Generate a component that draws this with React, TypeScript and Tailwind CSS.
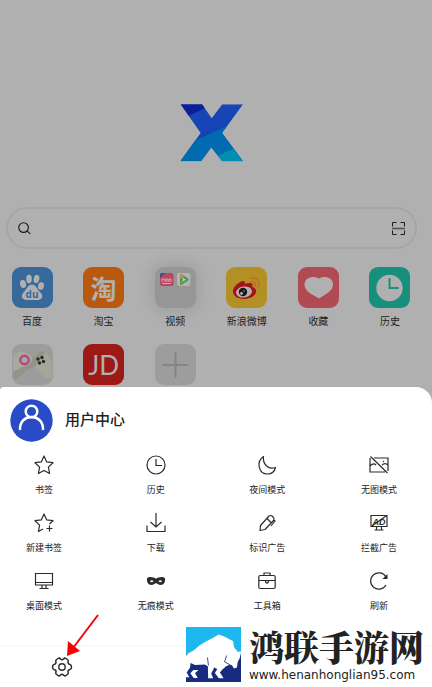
import React from 'react';

const ink = '#2b2b2b';

function Glyph({ children, size = 22 }: { children: React.ReactNode; size?: number }) {
  return (
    <svg width={size} height={size} viewBox="0 0 22 22" fill="none" stroke={ink} strokeWidth="1.2" aria-hidden="true">
      {children}
    </svg>
  );
}

function BrandLogo() {
  return (
    <svg width="64" height="58" viewBox="60 41 192 174" role="img" aria-label="X">
      <defs>
        <clipPath id="x-shape">
          <path d="M62 42H126L155 84L187 42H249L186 128L249 213H187L154 171L123 213H61L122 128Z" />
        </clipPath>
        <linearGradient id="x-blue" x1="0" y1="0" x2="0.35" y2="1">
          <stop offset="0.5" stopColor="#1745b6" />
          <stop offset="1" stopColor="#153a9c" />
        </linearGradient>
      </defs>
      <g clipPath="url(#x-shape)">
        <rect x="60" y="41" width="192" height="174" fill="url(#x-blue)" />
        <path d="M60 41H160L131 55L85 77L60 89Z" fill="#0c1e98" />
        <path d="M60 172L108 149L200 108L252 84V215H60Z" fill="#006bb1" />
        <path d="M170 198L222 174L252 160V215H170Z" fill="#008eb1" />
      </g>
    </svg>
  );
}

function BaiduIcon() {
  return (
    <svg viewBox="0 0 41 41" className="size-full" aria-hidden="true">
      <g fill="#b0b0b0">
        <ellipse cx="11" cy="17" rx="3" ry="4" transform="rotate(-12 11 17)" />
        <ellipse cx="17" cy="12" rx="2.8" ry="4.2" />
        <ellipse cx="24.500" cy="12" rx="2.800" ry="4.200" transform="rotate(12 24.500 12)" />
        <ellipse cx="29" cy="19" rx="3" ry="3.800" transform="rotate(12 29 19)" />
        <path d="M20 17.500c4 0 5 5 8 7.500 5 5 1 8.500-4 8h-8c-6 .5-8-4-4-8 3-3 4-7.500 8-7.500Z" />
      </g>
      <text x="20" y="31" textAnchor="middle" fontSize="10" fontWeight="700" fontFamily="Open Sans, sans-serif" fill="#38689a">du</text>
    </svg>
  );
}

function GameIcon() {
  return (
    <svg viewBox="0 0 41 41" className="size-full" aria-hidden="true">
      <path d="M22 15c4-9 11-10 15-2l3 8v13q-4 1-9-2l-8-8Z" fill="#a6a698" />
      <path d="M1 33l3-19c4-6 13-5 17 0 4-4 7-8 12-6-5 11-11 16-18 18L5 35q-3 0-4-2Z" fill="#939388" />
      <path d="M1 28V13c4-8 14-6 19 0 1 6-4 9-10 10Z" fill="#a8a89f" />
      <circle cx="12.500" cy="16" r="4.200" fill="#a8a8a8" stroke="#b84778" strokeWidth="2.400" />
      <g fill="#282828"><circle cx="26" cy="15" r="1.700" /><circle cx="30" cy="13.500" r="1.700" /><circle cx="27.500" cy="19" r="1.700" /><circle cx="31.500" cy="17.500" r="1.700" /></g>
    </svg>
  );
}

function FolderIcon() {
  return (
    <svg viewBox="0 0 41 41" className="size-full" aria-hidden="true">
      <rect x="5" y="6" width="13.500" height="13" rx="2.500" fill="#b94761" />
      <path d="M5 11V8q0-2 2-2h3Z" fill="#2c56a0" />
      <path d="M7 15v-3h3v3m1 0v-3h2v3m1 0v-3h2v3M7 16.500h9" fill="none" stroke="#cfa7b0" strokeWidth="1" />
      <rect x="22" y="6" width="13.500" height="13" rx="2.500" fill="#b4b5b0" />
      <path d="M25 8.500v8q0 2 2 1l6-4q1-1 0-2l-6-4q-2-1-2 1Z" fill="#258bae" />
      <path d="M25 14v3q1 1.500 2 .5l6-4-2-2Z" fill="#659f2d" />
      <path d="M25 12V8q1-1.500 2-.5l3 2Z" fill="#c48d27" />
      <path d="M27.500 10.500v4l3.500-2Z" fill="#c4c4bb" />
    </svg>
  );
}

function WeiboIcon() {
  return (
    <svg viewBox="0 0 41 41" className="size-full" aria-hidden="true">
      <path d="M7 25c-1-5 7-11 10-11 2 0 2.500 2 1.500 3 4-1.500 8-1.500 8 1 0 1-.5 1.500 0 2 8 3 2 12-8 12-6 0-10.500-2-11.500-7Z" fill="#a5131c" />
      <ellipse cx="18" cy="25" rx="8" ry="5.500" fill="#b3b3b3" transform="rotate(-8 18 25)" />
      <circle cx="17" cy="25" r="4.200" fill="#171717" />
      <circle cx="15.500" cy="26.500" r="1.400" fill="#b3b3b3" /><circle cx="18" cy="24" r=".7" fill="#b3b3b3" />
      <path d="M24.500 11.500c5-2.500 10 3 8 8M25 15c3-1 5 1 4 4" fill="none" stroke="#bd7525" strokeWidth="1.800" strokeLinecap="round" />
    </svg>
  );
}

const apps = [
  { name: '百度', tile: 'bg-[#38699b]', art: <BaiduIcon /> },
  {
    name: '淘宝', tile: 'bg-[#b95910]',
    art: <span className="text-[26px] leading-none font-bold text-[#b0b0b0]" aria-hidden="true">淘</span>,
  },
  { name: '视频', tile: 'bg-[#969696] shadow-[0_0_14px_4px_rgba(0,0,0,0.09)]', art: <FolderIcon /> },
  { name: '新浪微博', tile: 'bg-[#b39023]', art: <WeiboIcon /> },
  {
    name: '收藏', tile: 'bg-[#b04a53]',
    art: (
      <svg viewBox="0 0 41 41" className="size-full" aria-hidden="true">
        <path d="M21 11.500c4-3 14-2 14 6 0 6-6 9-14 14C13 27 6.500 24 6.500 17.500c0-8 10-9 14.500-6Z" fill="#b0b0b0" />
      </svg>
    ),
  },
  {
    name: '历史', tile: 'bg-[#188f7c]',
    art: (
      <svg viewBox="0 0 41 41" className="size-full" aria-hidden="true">
        <circle cx="20.500" cy="21" r="13.200" fill="#b0b0b0" />
        <path d="M20.500 12v9H29" fill="none" stroke="#188f7c" strokeWidth="2" strokeLinecap="round" />
      </svg>
    ),
  },
  { name: '游戏', tile: 'bg-[#9c9c9c]', art: <GameIcon />, bare: true },
  {
    name: '京东', tile: 'bg-[#9d1915]', bare: true,
    art: (
      <span className="font-['Lato',sans-serif] text-[26px] leading-none text-[#b0b0b0]" aria-hidden="true">JD</span>
    ),
  },
  {
    name: '添加', tile: 'bg-[#9d9d9d]', bare: true,
    art: (
      <svg viewBox="0 0 41 41" className="size-full" aria-hidden="true">
        <path d="M20.500 9v24M8.500 21h24" stroke="#858585" strokeWidth="2.200" strokeLinecap="round" />
      </svg>
    ),
  },
];

const star = 'M11 2l2.700 5.900 6.300.8-4.600 4.400 1.200 6.400L11 16.500l-5.600 3 1.200-6.400L2 8.700l6.300-.8Z';

const actions = [
  { name: '书签', icon: <path d={star} strokeLinejoin="round" /> },
  { name: '历史', icon: <><circle cx="11" cy="11" r="9" /><path d="M11 5v6.500h6" /></> },
  { name: '夜间模式', icon: <path d="M7.500 2.500C-.5 8 3 20 11.500 20c4 0 7-2.500 8-6.500C12 16 6.500 10 7.500 2.500Z" strokeLinejoin="round" /> },
  {
    name: '无图模式',
    icon: <><path d="M6 4h14v13M17 18H2V4M2 12c2-2 4-3 6-1M14 11c2-2 4-2 6 0M2.500 2.500 19.500 19" /><circle cx="15.500" cy="7.500" r=".7" fill={ink} stroke="none" /></>,
  },
  {
    name: '新建书签',
    icon: <path d="M10 17l-4.600 2.500 1.200-6.400L2 8.700l6.300-.8L11 2l2.700 5.900 6.300.8-3.500 3.300M16.500 13.500v6M13.500 16.500h6" strokeLinejoin="round" />,
  },
  { name: '下载', icon: <path d="M11 1v13.500M5.500 10l5.500 5 5.500-5M2 13.500v6h18v-6" /> },
  {
    name: '标识广告',
    icon: <path d="M4 18.500l.5-5 8.500-9.500q1.500-1 3 0l1.500 1.500q1 1.500 0 3L9 17.500ZM11 6.500l4.500 4.500M17.500 7.500l1.500 1.500-4 5" strokeLinejoin="round" />,
  },
  {
    name: '拦截广告',
    icon: <><path d="M3 3.500h16v11H3ZM8.500 14.500v3M13.500 14.500v3M6.500 18h9M4 14 18 4" /><text x="11" y="12.500" textAnchor="middle" fontFamily="Liberation Sans, sans-serif" fontSize="9" fontWeight="700" fontStyle="italic" fill={ink} stroke="none">AD</text></>,
  },
  { name: '桌面模式', icon: <path d="M2.500 3.500h17V15h-17ZM2.500 12.500h17M9 15v3.500M13 15v3.500M6.500 18.500h9" /> },
  {
    name: '无痕模式',
    icon: <path fill={ink} stroke="none" fillRule="evenodd" d="M2 8c3-2 7-.5 9 .7C13 7.500 17 6 20 8c.5 4-1 7-4.500 7-2 0-3-1.800-4.500-1.800S8.500 15 6.500 15C3 15 1.500 12 2 8Zm3 3.200c1 1.500 2.500 1.500 3.500 0-1-1.300-2.500-1.300-3.500 0Zm8.500 0c1 1.500 2.500 1.500 3.500 0-1-1.300-2.500-1.300-3.500 0Z" />,
  },
  {
    name: '工具箱',
    icon: <><rect x="2.800" y="5.500" width="16.400" height="13" rx="1.500" /><path d="M8 5.500V3h6v2.500M3 10.500h16M9.500 10.500c0 3.500 3 3.500 3 0" /></>,
  },
  { name: '刷新', icon: <><path d="M18 15A8.200 8.200 0 1 1 18 7" /><path d="M19.500 4v5h-5Z" fill={ink} stroke="none" /></> },
];

function Watermark() {
  return (
    <div className="pointer-events-none absolute right-2 bottom-1 flex items-center gap-2">
      <svg width="55" height="55" viewBox="0 0 164 164" role="img" aria-label="鸿联手游网">
        <path d="M0 0h164v90H0Z" fill="#1eb7ee" />
        <path d="M0 82h164v82H0Z" fill="#172c80" />
        <path d="M0 86C12 72 20 76 38 57C56 43 76 36 97 22C112 26 126 34 140 42L145 59C151 58 151 72 154 74L164 73L161 91L154 105L152 121L143 124L137 114C127 111 119 116 113 123L99 128L78 118L69 119L56 112L27 113L14 107L0 111Z" fill="#fff" />
        <path d="M143 28C157 37 137 44 143 58C145 66 153 70 158 73C149 50 162 46 143 28Z" fill="#1eb7ee" />
        <path d="M0 106L14 106L12 121L2 136L10 150H0ZM22 128H37L27 138L35 152H23L13 138Z" fill="#fff" />
        <path d="M65 105L82 110L83 124L75 139L81 153H66ZM97 119L117 117L101 136L112 153H98L86 137Z" fill="#fff" />
        <path d="M64 91L67 115M121 85L115 104L132 113" fill="none" stroke="#172c80" strokeWidth="2.500" />
      </svg>
      <div className="flex flex-col">
        <strong className="font-['Noto_Serif_CJK_SC','Noto_Sans_CJK_SC',serif] text-[35px] leading-[42px] font-black text-[#222]">鸿联手游网</strong>
        <span className="font-['DejaVu_Sans',sans-serif] text-[12px] leading-4 text-[#222]">www.henanhonglian95.com</span>
      </div>
    </div>
  );
}

export default function App() {
  return (
    <div className="relative flex min-h-screen flex-col bg-[#b0b0b0] font-['Noto_Sans_CJK_SC',sans-serif]">
      <main className="flex flex-col pt-[104px] pb-0.5">
        <div className="flex justify-center pr-2">
          <BrandLogo />
        </div>

        <form role="search" className="mt-[45px] mr-[15px] ml-1.5 flex h-[42px] items-center rounded-full border-2 border-[#a5a5a5] px-2.5" onSubmit={(e) => e.preventDefault()}>
          <label htmlFor="search" aria-label="搜索" className="shrink-0">
            <svg width="13" height="13" viewBox="0 0 14 14" fill="none" stroke="#171717" strokeWidth="1.200" aria-hidden="true">
              <circle cx="6" cy="6" r="5.200" /><path d="m9.800 9.800 3.500 3" />
            </svg>
          </label>
          <input id="search" type="text" className="min-w-0 flex-1 bg-transparent px-2 text-sm outline-none" />
          <button type="button" aria-label="扫描" className="shrink-0">
            <svg width="13" height="13" viewBox="0 0 13 13" fill="none" stroke="#1b1b1b" strokeWidth="1" aria-hidden="true">
              <path d="M.5 4.500v-4h4M8.500 .5h4v4M.5 8.500v4h4M8.500 12.500h4v-4" /><path d="M0 6.500h13" stroke="#555" strokeWidth="1.600" />
            </svg>
          </button>
        </form>

        <nav aria-label="快捷方式" className="mt-[18px] mr-2.5 grid grid-cols-[repeat(6,64px)] justify-between">
          {apps.map((app) => (
            <a key={app.name} href="#" aria-label={app.name} className="flex flex-col items-center">
              <span className={`flex size-[41px] items-center justify-center overflow-hidden rounded-[9px] ${app.tile}`}>{app.art}</span>
              {!app.bare && <span className="mt-[5px] mb-[15px] text-[10px] leading-4 text-[#222]">{app.name}</span>}
            </a>
          ))}
        </nav>
      </main>

      <section aria-label="菜单" className="flex flex-1 flex-col rounded-tl-sm rounded-tr-[16px] bg-white">
        <button type="button" className="flex items-start gap-3 self-start pt-3 pl-2.5 text-left">
          <svg width="43" height="43" viewBox="0 0 43 43" fill="none" stroke="#fff" strokeWidth="2.500" aria-hidden="true">
            <circle cx="21.500" cy="21.500" r="21.200" fill="#294bc5" stroke="none" />
            <circle cx="21.500" cy="12.500" r="5.800" />
            <path d="M10 30C10 14 33 14 33 30" strokeLinecap="round" />
          </svg>
          <span className="text-[15px] leading-10 font-medium text-[#222]">用户中心</span>
        </button>

        <ul className="mt-3 grid grid-cols-[repeat(4,80px)] justify-between gap-y-[15px] pr-[13px] pl-1">
          {actions.map((action) => (
            <li key={action.name}>
              <button type="button" className="flex w-full flex-col items-center gap-[7px]">
                <Glyph>{action.icon}</Glyph>
                <span className="text-[9px] leading-[14px] text-[#222]">{action.name}</span>
              </button>
            </li>
          ))}
        </ul>

        <footer className="mt-auto flex h-[42px] items-center border-t border-[#f7f7f7] pl-[51px]">
          <button type="button" aria-label="设置">
            <Glyph>
              <path strokeWidth="1.500" strokeLinejoin="round" d="M7 2.500Q8.500 1.500 9.500 3Q11 4.500 12.500 3Q13.500 1.500 15 2.500L17 4Q17.500 5 17 6.200Q16.800 8 19 8.500Q20.500 9 20.500 11T19 13.500Q16.800 14 17 15.800Q17.500 17 17 18L15 19.500Q13.500 20.500 12.500 19Q11 17.500 9.500 19Q8.500 20.500 7 19.500L5 18Q4.500 17 5 15.800Q5.200 14 3 13.500Q1.500 13 1.500 11T3 8.500Q5.200 8 5 6.200Q4.500 5 5 4Z" />
              <circle cx="11" cy="11" r="3.200" strokeWidth="1.400" />
            </Glyph>
          </button>
        </footer>
      </section>

      <svg className="pointer-events-none absolute bottom-[30px] left-[66px]" width="34" height="44" viewBox="0 0 34 44" aria-hidden="true">
        <path d="M32 2 7 35" stroke="#fb0007" strokeWidth="2" />
        <path d="M1 43 2 28 14 38Z" fill="#fb0007" />
      </svg>
      <Watermark />
    </div>
  );
}
